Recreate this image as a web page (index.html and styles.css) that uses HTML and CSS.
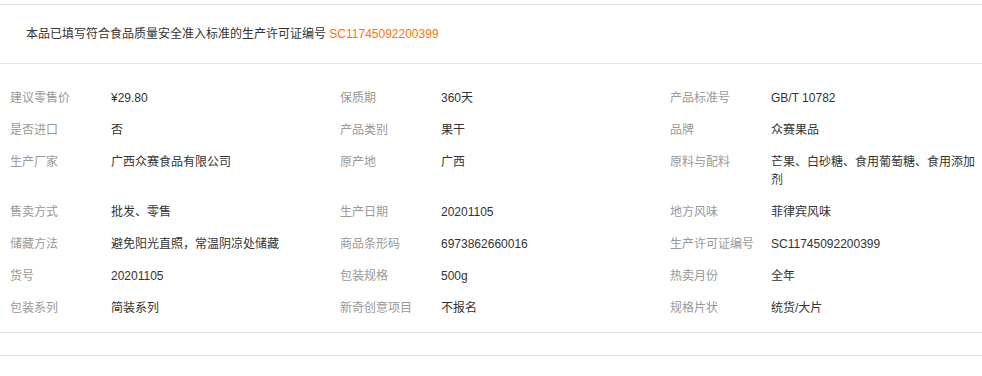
FILE: index.html
```html
<!DOCTYPE html>
<html lang="zh-CN">

<head>
    <meta charset="UTF-8">
    <meta name="viewport" content="width=device-width, initial-scale=1.0">
    <title>商品属性</title>
    <link rel="stylesheet" href="styles.css">
</head>

<body>
    <div class="attrs">
        <div class="license">
            本品已填写符合食品质量安全准入标准的生产许可证编号 <span class="license-no">SC11745092200399</span>
        </div>

        <ul class="attr-list">
            <li><span class="name">建议零售价</span><span class="value">¥29.80</span></li>
            <li><span class="name">保质期</span><span class="value">360天</span></li>
            <li><span class="name">产品标准号</span><span class="value">GB/T 10782</span></li>

            <li><span class="name">是否进口</span><span class="value">否</span></li>
            <li><span class="name">产品类别</span><span class="value">果干</span></li>
            <li><span class="name">品牌</span><span class="value">众赛果品</span></li>

            <li><span class="name">生产厂家</span><span class="value">广西众赛食品有限公司</span></li>
            <li><span class="name">原产地</span><span class="value">广西</span></li>
            <li><span class="name">原料与配料</span><span class="value">芒果、白砂糖、食用葡萄糖、食用添加剂</span></li>

            <li><span class="name">售卖方式</span><span class="value">批发、零售</span></li>
            <li><span class="name">生产日期</span><span class="value">20201105</span></li>
            <li><span class="name">地方风味</span><span class="value">菲律宾风味</span></li>

            <li><span class="name">储藏方法</span><span class="value">避免阳光直照，常温阴凉处储藏</span></li>
            <li><span class="name">商品条形码</span><span class="value">6973862660016</span></li>
            <li><span class="name">生产许可证编号</span><span class="value">SC11745092200399</span></li>

            <li><span class="name">货号</span><span class="value">20201105</span></li>
            <li><span class="name">包装规格</span><span class="value">500g</span></li>
            <li><span class="name">热卖月份</span><span class="value">全年</span></li>

            <li><span class="name">包装系列</span><span class="value">简装系列</span></li>
            <li><span class="name">新奇创意项目</span><span class="value">不报名</span></li>
            <li><span class="name">规格片状</span><span class="value">统货/大片</span></li>
        </ul>

        <div class="attrs-foot"></div>
    </div>
</body>

</html>
```

FILE: styles.css
```css
body {
    margin: 0;
    font-family: "Liberation Sans", "Noto Sans CJK SC", sans-serif;
    font-size: 12px;
    line-height: 18px;
    color: #333;
    background-color: #fff;
}

.attrs {
    margin-top: 4px;
    border-top: 1px solid #e5e5e5;
}

/* licence notice above the list */
.license {
    padding: 20px 26px;
    border-bottom: 1px solid #e5e5e5;
}

.license-no {
    color: #ff7300;
}

.attr-list {
    display: grid;
    grid-template-columns: 330px 330px 1fr;
    margin: 0;
    padding: 18px 0 8px;
    list-style: none;
    border-bottom: 1px solid #e5e5e5;
}

.attr-list li {
    display: flex;
    padding: 7px 0 7px 10px;
}

.attr-list .name {
    flex-shrink: 0;
    width: 101px;
    color: #999;
}

.attr-list .value {
    flex: 1;
    color: #333;
}

.attrs-foot {
    height: 22px;
    border-bottom: 1px solid #e5e5e5;
}
```
